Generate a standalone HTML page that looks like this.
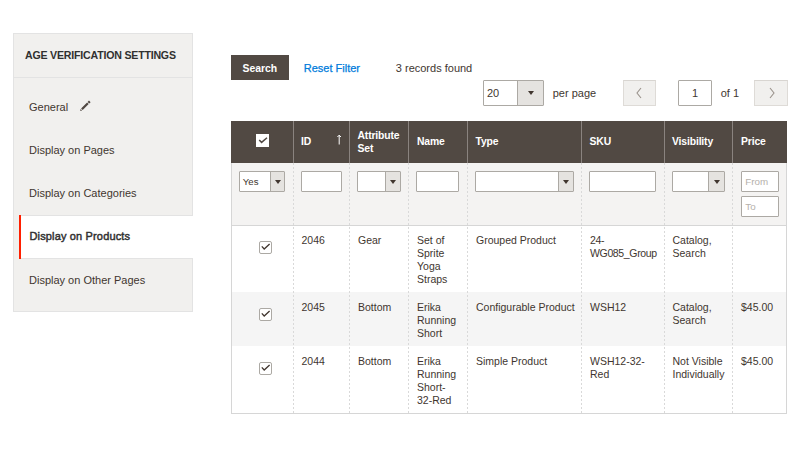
<!DOCTYPE html>
<html><head><meta charset="utf-8">
<style>
*{box-sizing:border-box;margin:0;padding:0}
html,body{width:800px;height:450px;background:#fff;overflow:hidden}
body{font-family:"Liberation Sans",sans-serif;color:#41362f;position:relative}
.a{position:absolute;white-space:nowrap;line-height:13px}
#nav{position:absolute;left:13px;top:33px;width:180px;height:279px;background:#f1f0ee;border:1px solid #e3e3e3}
#navtitle{position:absolute;left:13px;top:33px;width:180px;height:45px;border-bottom:1px solid #e3e3e3}
#active{position:absolute;left:21px;top:215px;width:172px;height:44px;background:#fff;border-top:1px solid #e3e3e3;border-bottom:1px solid #e3e3e3}
#redbar{position:absolute;left:19px;top:215px;width:2px;height:44px;background:#ff1f00}
.nt{font-size:11px;color:#41362f}
.btn{position:absolute;left:231px;top:55px;width:58px;height:25px;background:#514943}
.sel{position:absolute;background:#fff;border:1px solid #aca9a4;border-radius:1px}
.sel .dd{position:absolute;right:0;top:0;bottom:0;background:#e5e3e0;border-left:1px solid #aca9a4}
.sel .dd:after{content:"";position:absolute;left:50%;top:50%;margin-left:-3px;margin-top:-2px;border-left:3px solid transparent;border-right:3px solid transparent;border-top:4px solid #41362f}
.inp{position:absolute;background:#fff;border:1px solid #aca9a4;border-radius:1px}
.pbtn{position:absolute;top:80px;width:33px;height:26px;background:#f1f0ee;border:1px solid #dedbd7;border-top-color:#d8d5d1}
#thead{position:absolute;left:231px;top:121px;width:556px;height:42px;background:#514943}
.vd{position:absolute;top:121px;height:42px;width:1px;background:#8a837f}
.hd{font-size:10.4px;font-weight:bold;color:#fff;letter-spacing:-0.15px}
#filt{position:absolute;left:231px;top:163px;width:556px;height:63px;background:#f4f3f2;border-left:1px solid #d6d6d6;border-right:1px solid #d6d6d6;border-bottom:1px solid #d6d6d6}
#r1{position:absolute;left:231px;top:226px;width:556px;height:66px;background:#fff;border-left:1px solid #d6d6d6;border-right:1px solid #d6d6d6}
#r2{position:absolute;left:231px;top:292px;width:556px;height:54px;background:#f5f5f5;border-left:1px solid #d6d6d6;border-right:1px solid #d6d6d6}
#r3{position:absolute;left:231px;top:346px;width:556px;height:68px;background:#fff;border-left:1px solid #d6d6d6;border-right:1px solid #d6d6d6;border-bottom:1px solid #d6d6d6}
.dash{position:absolute;top:163px;height:250px;width:1px;background:repeating-linear-gradient(to bottom,#d9d9d9 0,#d9d9d9 2px,transparent 2px,transparent 4px)}
.cb{position:absolute;width:12.5px;height:12.5px;background:#fff;border:1px solid #aca9a4;border-radius:2px}
.cb svg{position:absolute;left:1px;top:1px}
.td{font-size:10.5px;color:#41362f}
</style></head><body>
<div id="nav"></div>
<div id="navtitle"></div>
<div class="a" style="left:25px;top:49.3px;font-size:10.6px;font-weight:bold;color:#303030;letter-spacing:-0.2px">AGE VERIFICATION SETTINGS</div>
<div class="a nt" style="left:29px;top:100.5px">General</div>
<svg style="position:absolute;left:78px;top:99px" width="14" height="14" viewBox="0 0 14 14"><path d="M2.2 12 L2.6 10.1 L4.1 11.6 Z" fill="#514943"/><path d="M3.9 10.3 L9.9 4.3 M10.4 3.8 L11.8 2.4" stroke="#514943" stroke-width="2.3" fill="none"/></svg>
<div class="a nt" style="left:29px;top:143.5px">Display on Pages</div>
<div class="a nt" style="left:29px;top:187px">Display on Categories</div>
<div id="active"></div><div id="redbar"></div>
<div class="a nt" style="left:29.5px;top:230.4px;color:#303030;letter-spacing:0.15px;-webkit-text-stroke:0.45px #303030">Display on Products</div>
<div class="a nt" style="left:29px;top:273.6px">Display on Other Pages</div>

<div class="btn"></div>
<div class="a" style="left:242.5px;top:62.2px;font-size:10.4px;font-weight:bold;color:#fff">Search</div>
<div class="a" style="left:303.8px;top:62px;font-size:11px;color:#007bdb;-webkit-text-stroke:0.25px #007bdb">Reset Filter</div>
<div class="a" style="left:395.8px;top:62px;font-size:11px;color:#41362f">3 records found</div>

<div class="sel" style="left:483px;top:80px;width:61px;height:26px"><div class="dd" style="width:26px"></div></div>
<div class="a" style="left:487px;top:87px;font-size:11px">20</div>
<div class="a" style="left:552.7px;top:87px;font-size:11px">per page</div>
<div class="pbtn" style="left:623px"></div>
<svg style="position:absolute;left:634px;top:87px" width="10" height="12" viewBox="0 0 10 12"><path d="M7 1 L3 6 L7 11" fill="none" stroke="#9a938c" stroke-width="1.1"/></svg>
<div class="inp" style="left:678px;top:80px;width:34px;height:26px"></div>
<div class="a" style="left:692px;top:87px;font-size:11px">1</div>
<div class="a" style="left:720.7px;top:87px;font-size:11px">of 1</div>
<div class="pbtn" style="left:754px;width:34px"></div>
<svg style="position:absolute;left:767px;top:87px" width="10" height="12" viewBox="0 0 10 12"><path d="M3 1 L7 6 L3 11" fill="none" stroke="#9a938c" stroke-width="1.1"/></svg>

<div id="thead"></div>
<div class="vd" style="left:293px"></div>
<div class="vd" style="left:349px"></div>
<div class="vd" style="left:408px"></div>
<div class="vd" style="left:467px"></div>
<div class="vd" style="left:581px"></div>
<div class="vd" style="left:664px"></div>
<div class="vd" style="left:732px"></div>
<div class="cb" style="left:256px;top:134px;border-color:#fff;border-radius:0"><svg width="11" height="11" viewBox="0 0 11 11" style="left:0;top:0"><path d="M2.2 5 L4.6 7.4 L10 2.8" fill="none" stroke="#514943" stroke-width="1.5"/></svg></div>
<div class="a hd" style="left:301px;top:134.7px">ID</div>
<svg style="position:absolute;left:336px;top:134px" width="6" height="11" viewBox="0 0 6 11"><path d="M3.2 1.2 L3.2 10.5 M1.4 3 L3.2 1.2 L5 3" fill="none" stroke="#fff" stroke-width="1"/></svg>
<div class="a hd" style="left:357.5px;top:129px">Attribute<br>Set</div>
<div class="a hd" style="left:417px;top:134.7px">Name</div>
<div class="a hd" style="left:475.5px;top:134.7px">Type</div>
<div class="a hd" style="left:589.6px;top:134.7px">SKU</div>
<div class="a hd" style="left:672px;top:134.7px">Visibility</div>
<div class="a hd" style="left:741px;top:134.7px">Price</div>

<div id="filt"></div>
<div id="r1"></div>
<div id="r2"></div>
<div id="r3"></div>
<div class="dash" style="left:293px"></div>
<div class="dash" style="left:349px"></div>
<div class="dash" style="left:408px"></div>
<div class="dash" style="left:467px"></div>
<div class="dash" style="left:581px"></div>
<div class="dash" style="left:664px"></div>
<div class="dash" style="left:732px"></div>

<div class="sel" style="left:239px;top:171px;width:46px;height:21px"><div class="dd" style="width:14px"></div></div>
<div class="a td" style="left:242.8px;top:174.9px;font-size:9.6px">Yes</div>
<div class="inp" style="left:301px;top:171px;width:41px;height:21px"></div>
<div class="sel" style="left:357px;top:171px;width:44px;height:21px"><div class="dd" style="width:15px"></div></div>
<div class="inp" style="left:416px;top:171px;width:43px;height:21px"></div>
<div class="sel" style="left:475px;top:171px;width:99px;height:21px"><div class="dd" style="width:15px"></div></div>
<div class="inp" style="left:589px;top:171px;width:67px;height:21px"></div>
<div class="sel" style="left:672px;top:171px;width:53px;height:21px"><div class="dd" style="width:16px"></div></div>
<div class="inp" style="left:741px;top:171px;width:38px;height:21px"></div>
<div class="a td" style="left:745.3px;top:175.4px;font-size:9.8px;color:#b5b0ab">From</div>
<div class="inp" style="left:741px;top:196px;width:38px;height:21px"></div>
<div class="a td" style="left:745.3px;top:200.4px;font-size:9.8px;color:#b5b0ab">To</div>

<!-- row 1 -->
<div class="cb" style="left:259px;top:241px"><svg width="11" height="11" viewBox="0 0 11 11" style="left:0;top:0"><path d="M1.8 4.4 L4.2 7 L9.6 2" fill="none" stroke="#41362f" stroke-width="1.3"/></svg></div>
<div class="a td" style="left:301.5px;top:233.5px">2046</div>
<div class="a td" style="left:358px;top:233.5px">Gear</div>
<div class="a td" style="left:417px;top:233.5px">Set of<br>Sprite<br>Yoga<br>Straps</div>
<div class="a td" style="left:476px;top:233.5px">Grouped Product</div>
<div class="a td" style="left:590px;top:233.5px;letter-spacing:-0.35px">24-<br>WG085_Group</div>
<div class="a td" style="left:672.5px;top:233.5px">Catalog,<br>Search</div>

<!-- row 2 -->
<div class="cb" style="left:259px;top:308px"><svg width="11" height="11" viewBox="0 0 11 11" style="left:0;top:0"><path d="M1.8 4.4 L4.2 7 L9.6 2" fill="none" stroke="#41362f" stroke-width="1.3"/></svg></div>
<div class="a td" style="left:301.5px;top:300.5px">2045</div>
<div class="a td" style="left:358px;top:300.5px">Bottom</div>
<div class="a td" style="left:417px;top:300.5px">Erika<br>Running<br>Short</div>
<div class="a td" style="left:476px;top:300.5px">Configurable Product</div>
<div class="a td" style="left:590px;top:300.5px">WSH12</div>
<div class="a td" style="left:672.5px;top:300.5px">Catalog,<br>Search</div>
<div class="a td" style="left:741px;top:300.5px">$45.00</div>

<!-- row 3 -->
<div class="cb" style="left:259px;top:362px"><svg width="11" height="11" viewBox="0 0 11 11" style="left:0;top:0"><path d="M1.8 4.4 L4.2 7 L9.6 2" fill="none" stroke="#41362f" stroke-width="1.3"/></svg></div>
<div class="a td" style="left:301.5px;top:354.5px">2044</div>
<div class="a td" style="left:358px;top:354.5px">Bottom</div>
<div class="a td" style="left:417px;top:354.5px">Erika<br>Running<br>Short-<br>32-Red</div>
<div class="a td" style="left:476px;top:354.5px">Simple Product</div>
<div class="a td" style="left:590px;top:354.5px">WSH12-32-<br>Red</div>
<div class="a td" style="left:672.5px;top:354.5px">Not Visible<br>Individually</div>
<div class="a td" style="left:741px;top:354.5px">$45.00</div>
</body></html>
